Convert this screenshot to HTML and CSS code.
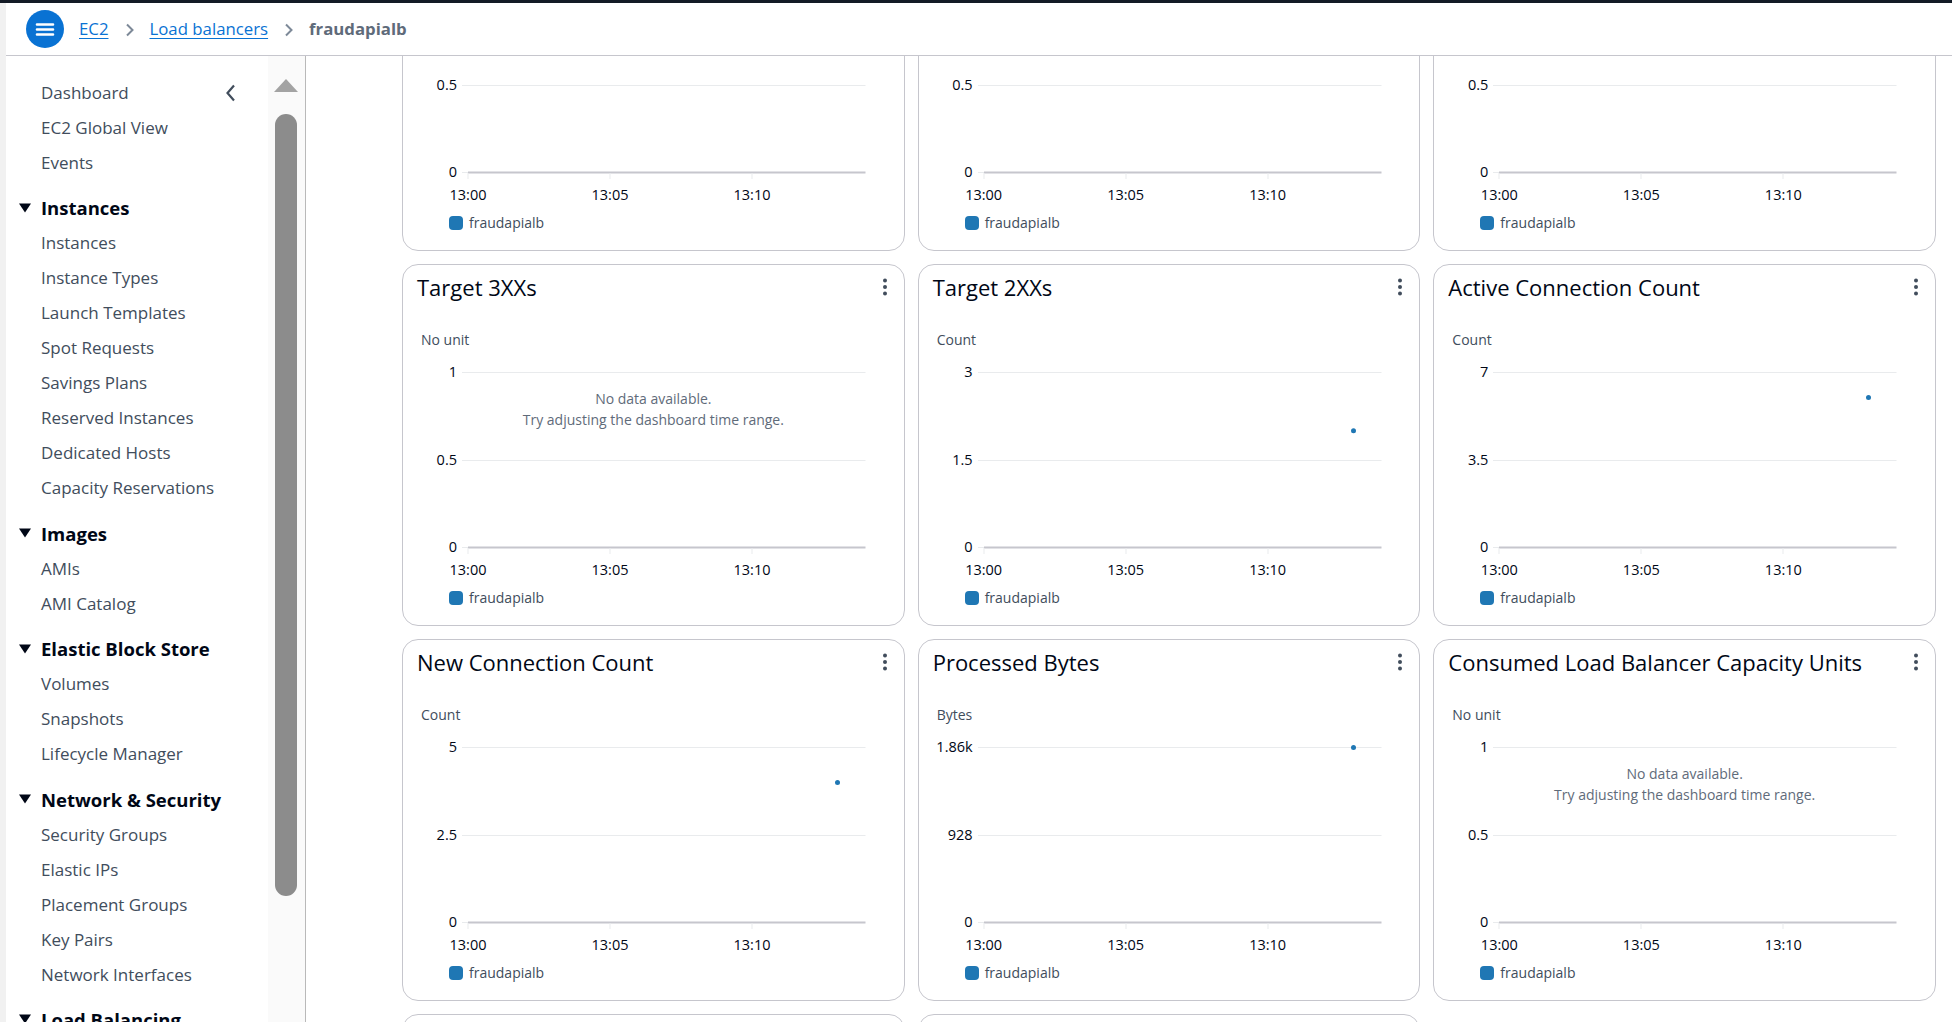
FILE: index.html
```html
<!DOCTYPE html>
<html lang="en">
<head>
<meta charset="utf-8">
<title>fraudapialb | Load balancers | EC2</title>
<link rel="stylesheet" href="styles.css">
</head>
<body>
<div class="topbar"></div>
<div class="frame">
  <div class="edge"></div>
  <div class="app">
    <header class="header">
      <span class="menu-btn">
        <svg width="38" height="38" viewBox="0 0 38 38"><circle cx="19" cy="19" r="19" fill="#0972d3"/><path d="M11 14.5h16M11 19.5h16M11 24.5h16" stroke="#fff" stroke-width="2.6" stroke-linecap="round"/></svg>
      </span>
      <nav class="crumbs">
        <a class="crumb-link" href="#">EC2</a>
        <svg class="crumb-sep" width="10" height="14" viewBox="0 0 10 14"><path d="M2 1.5l5.5 5.5L2 12.5" fill="none" stroke="#7d8998" stroke-width="2"/></svg>
        <a class="crumb-link" href="#">Load balancers</a>
        <svg class="crumb-sep" width="10" height="14" viewBox="0 0 10 14"><path d="M2 1.5l5.5 5.5L2 12.5" fill="none" stroke="#7d8998" stroke-width="2"/></svg>
        <span class="crumb-current">fraudapialb</span>
      </nav>
    </header>
    <div class="body">
      <aside class="sidenav">
        <div class="nav-list">
          <div class="nav-item nav-first"><span>Dashboard</span>
            <svg class="nav-close" width="12" height="18" viewBox="0 0 12 18"><path d="M9 1.5L2.5 9 9 16.5" fill="none" stroke="#414d5c" stroke-width="2.2"/></svg>
          </div>
          <div class="nav-item">EC2 Global View</div>
          <div class="nav-item">Events</div>
          <div class="nav-section"><svg class="tri" width="14" height="10" viewBox="0 0 14 10"><path d="M1 0.5h12L7 9.5z" fill="#000716"/></svg>Instances</div>
          <div class="nav-item">Instances</div>
          <div class="nav-item">Instance Types</div>
          <div class="nav-item">Launch Templates</div>
          <div class="nav-item">Spot Requests</div>
          <div class="nav-item">Savings Plans</div>
          <div class="nav-item">Reserved Instances</div>
          <div class="nav-item">Dedicated Hosts</div>
          <div class="nav-item">Capacity Reservations</div>
          <div class="nav-section"><svg class="tri" width="14" height="10" viewBox="0 0 14 10"><path d="M1 0.5h12L7 9.5z" fill="#000716"/></svg>Images</div>
          <div class="nav-item">AMIs</div>
          <div class="nav-item">AMI Catalog</div>
          <div class="nav-section"><svg class="tri" width="14" height="10" viewBox="0 0 14 10"><path d="M1 0.5h12L7 9.5z" fill="#000716"/></svg>Elastic Block Store</div>
          <div class="nav-item">Volumes</div>
          <div class="nav-item">Snapshots</div>
          <div class="nav-item">Lifecycle Manager</div>
          <div class="nav-section"><svg class="tri" width="14" height="10" viewBox="0 0 14 10"><path d="M1 0.5h12L7 9.5z" fill="#000716"/></svg>Network &amp; Security</div>
          <div class="nav-item">Security Groups</div>
          <div class="nav-item">Elastic IPs</div>
          <div class="nav-item">Placement Groups</div>
          <div class="nav-item">Key Pairs</div>
          <div class="nav-item">Network Interfaces</div>
          <div class="nav-section"><svg class="tri" width="14" height="10" viewBox="0 0 14 10"><path d="M1 0.5h12L7 9.5z" fill="#000716"/></svg>Load Balancing</div>
        </div>
      </aside>
      <div class="nav-scroll">
        <svg class="scroll-up" width="24" height="13" viewBox="0 0 24 13"><path d="M12 0L24 13H0z" fill="#a3a3a3"/></svg>
        <div class="scroll-thumb"></div>
      </div>
      <main class="main">
        <div class="grid">

          <!-- row 1 (scrolled mostly out of view) -->
          <section class="card">
            <div class="card-head"><h2 class="card-title"></h2></div>
            <div class="unit"></div>
            <div class="plot">
              <svg class="plot-lines" width="100%" height="238"><line class="gl" x1="59" y1="22.5" x2="462.5" y2="22.5"/><line class="gl" x1="59" y1="110.5" x2="462.5" y2="110.5"/><line class="gl" x1="59" y1="197.5" x2="65" y2="197.5"/><line class="ax" x1="65" y1="197.5" x2="462.5" y2="197.5"/><line class="tk" x1="65" y1="198" x2="65" y2="204"/><line class="tk" x1="207" y1="198" x2="207" y2="204"/><line class="tk" x1="349" y1="198" x2="349" y2="204"/></svg>
              <span class="ylab y-mid">0.5</span><span class="ylab y-bot">0</span>
              <span class="xlab x0">13:00</span><span class="xlab x5">13:05</span><span class="xlab x10">13:10</span>
            </div>
            <div class="legend"><span class="swatch"></span>fraudapialb</div>
          </section>
          <section class="card">
            <div class="card-head"><h2 class="card-title"></h2></div>
            <div class="unit"></div>
            <div class="plot">
              <svg class="plot-lines" width="100%" height="238"><line class="gl" x1="59" y1="22.5" x2="462.5" y2="22.5"/><line class="gl" x1="59" y1="110.5" x2="462.5" y2="110.5"/><line class="gl" x1="59" y1="197.5" x2="65" y2="197.5"/><line class="ax" x1="65" y1="197.5" x2="462.5" y2="197.5"/><line class="tk" x1="65" y1="198" x2="65" y2="204"/><line class="tk" x1="207" y1="198" x2="207" y2="204"/><line class="tk" x1="349" y1="198" x2="349" y2="204"/></svg>
              <span class="ylab y-mid">0.5</span><span class="ylab y-bot">0</span>
              <span class="xlab x0">13:00</span><span class="xlab x5">13:05</span><span class="xlab x10">13:10</span>
            </div>
            <div class="legend"><span class="swatch"></span>fraudapialb</div>
          </section>
          <section class="card">
            <div class="card-head"><h2 class="card-title"></h2></div>
            <div class="unit"></div>
            <div class="plot">
              <svg class="plot-lines" width="100%" height="238"><line class="gl" x1="59" y1="22.5" x2="462.5" y2="22.5"/><line class="gl" x1="59" y1="110.5" x2="462.5" y2="110.5"/><line class="gl" x1="59" y1="197.5" x2="65" y2="197.5"/><line class="ax" x1="65" y1="197.5" x2="462.5" y2="197.5"/><line class="tk" x1="65" y1="198" x2="65" y2="204"/><line class="tk" x1="207" y1="198" x2="207" y2="204"/><line class="tk" x1="349" y1="198" x2="349" y2="204"/></svg>
              <span class="ylab y-mid">0.5</span><span class="ylab y-bot">0</span>
              <span class="xlab x0">13:00</span><span class="xlab x5">13:05</span><span class="xlab x10">13:10</span>
            </div>
            <div class="legend"><span class="swatch"></span>fraudapialb</div>
          </section>

          <!-- row 2 -->
          <section class="card">
            <div class="card-head"><h2 class="card-title">Target 3XXs</h2><svg class="kebab" width="6" height="20" viewBox="0 0 6 20"><circle cx="3" cy="3.5" r="2"/><circle cx="3" cy="10" r="2"/><circle cx="3" cy="16.5" r="2"/></svg></div>
            <div class="unit">No unit</div>
            <div class="plot">
              <svg class="plot-lines" width="100%" height="238"><line class="gl" x1="59" y1="22.5" x2="462.5" y2="22.5"/><line class="gl" x1="59" y1="110.5" x2="462.5" y2="110.5"/><line class="gl" x1="59" y1="197.5" x2="65" y2="197.5"/><line class="ax" x1="65" y1="197.5" x2="462.5" y2="197.5"/><line class="tk" x1="65" y1="198" x2="65" y2="204"/><line class="tk" x1="207" y1="198" x2="207" y2="204"/><line class="tk" x1="349" y1="198" x2="349" y2="204"/></svg>
              <span class="ylab y-top">1</span><span class="ylab y-mid">0.5</span><span class="ylab y-bot">0</span>
              <div class="nodata"><div>No data available.</div><div>Try adjusting the dashboard time range.</div></div>
              <span class="xlab x0">13:00</span><span class="xlab x5">13:05</span><span class="xlab x10">13:10</span>
            </div>
            <div class="legend"><span class="swatch"></span>fraudapialb</div>
          </section>
          <section class="card">
            <div class="card-head"><h2 class="card-title">Target 2XXs</h2><svg class="kebab" width="6" height="20" viewBox="0 0 6 20"><circle cx="3" cy="3.5" r="2"/><circle cx="3" cy="10" r="2"/><circle cx="3" cy="16.5" r="2"/></svg></div>
            <div class="unit">Count</div>
            <div class="plot">
              <svg class="plot-lines" width="100%" height="238"><line class="gl" x1="59" y1="22.5" x2="462.5" y2="22.5"/><line class="gl" x1="59" y1="110.5" x2="462.5" y2="110.5"/><line class="gl" x1="59" y1="197.5" x2="65" y2="197.5"/><line class="ax" x1="65" y1="197.5" x2="462.5" y2="197.5"/><line class="tk" x1="65" y1="198" x2="65" y2="204"/><line class="tk" x1="207" y1="198" x2="207" y2="204"/><line class="tk" x1="349" y1="198" x2="349" y2="204"/><circle class="dot" cx="434.5" cy="80.7" r="2.5"/></svg>
              <span class="ylab y-top">3</span><span class="ylab y-mid">1.5</span><span class="ylab y-bot">0</span>
              <span class="xlab x0">13:00</span><span class="xlab x5">13:05</span><span class="xlab x10">13:10</span>
            </div>
            <div class="legend"><span class="swatch"></span>fraudapialb</div>
          </section>
          <section class="card">
            <div class="card-head"><h2 class="card-title">Active Connection Count</h2><svg class="kebab" width="6" height="20" viewBox="0 0 6 20"><circle cx="3" cy="3.5" r="2"/><circle cx="3" cy="10" r="2"/><circle cx="3" cy="16.5" r="2"/></svg></div>
            <div class="unit">Count</div>
            <div class="plot">
              <svg class="plot-lines" width="100%" height="238"><line class="gl" x1="59" y1="22.5" x2="462.5" y2="22.5"/><line class="gl" x1="59" y1="110.5" x2="462.5" y2="110.5"/><line class="gl" x1="59" y1="197.5" x2="65" y2="197.5"/><line class="ax" x1="65" y1="197.5" x2="462.5" y2="197.5"/><line class="tk" x1="65" y1="198" x2="65" y2="204"/><line class="tk" x1="207" y1="198" x2="207" y2="204"/><line class="tk" x1="349" y1="198" x2="349" y2="204"/><circle class="dot" cx="434.5" cy="47.4" r="2.5"/></svg>
              <span class="ylab y-top">7</span><span class="ylab y-mid">3.5</span><span class="ylab y-bot">0</span>
              <span class="xlab x0">13:00</span><span class="xlab x5">13:05</span><span class="xlab x10">13:10</span>
            </div>
            <div class="legend"><span class="swatch"></span>fraudapialb</div>
          </section>

          <!-- row 3 -->
          <section class="card">
            <div class="card-head"><h2 class="card-title">New Connection Count</h2><svg class="kebab" width="6" height="20" viewBox="0 0 6 20"><circle cx="3" cy="3.5" r="2"/><circle cx="3" cy="10" r="2"/><circle cx="3" cy="16.5" r="2"/></svg></div>
            <div class="unit">Count</div>
            <div class="plot">
              <svg class="plot-lines" width="100%" height="238"><line class="gl" x1="59" y1="22.5" x2="462.5" y2="22.5"/><line class="gl" x1="59" y1="110.5" x2="462.5" y2="110.5"/><line class="gl" x1="59" y1="197.5" x2="65" y2="197.5"/><line class="ax" x1="65" y1="197.5" x2="462.5" y2="197.5"/><line class="tk" x1="65" y1="198" x2="65" y2="204"/><line class="tk" x1="207" y1="198" x2="207" y2="204"/><line class="tk" x1="349" y1="198" x2="349" y2="204"/><circle class="dot" cx="434.5" cy="57.4" r="2.5"/></svg>
              <span class="ylab y-top">5</span><span class="ylab y-mid">2.5</span><span class="ylab y-bot">0</span>
              <span class="xlab x0">13:00</span><span class="xlab x5">13:05</span><span class="xlab x10">13:10</span>
            </div>
            <div class="legend"><span class="swatch"></span>fraudapialb</div>
          </section>
          <section class="card">
            <div class="card-head"><h2 class="card-title">Processed Bytes</h2><svg class="kebab" width="6" height="20" viewBox="0 0 6 20"><circle cx="3" cy="3.5" r="2"/><circle cx="3" cy="10" r="2"/><circle cx="3" cy="16.5" r="2"/></svg></div>
            <div class="unit">Bytes</div>
            <div class="plot">
              <svg class="plot-lines" width="100%" height="238"><line class="gl" x1="59" y1="22.5" x2="462.5" y2="22.5"/><line class="gl" x1="59" y1="110.5" x2="462.5" y2="110.5"/><line class="gl" x1="59" y1="197.5" x2="65" y2="197.5"/><line class="ax" x1="65" y1="197.5" x2="462.5" y2="197.5"/><line class="tk" x1="65" y1="198" x2="65" y2="204"/><line class="tk" x1="207" y1="198" x2="207" y2="204"/><line class="tk" x1="349" y1="198" x2="349" y2="204"/><circle class="dot" cx="434.5" cy="22.5" r="2.5"/></svg>
              <span class="ylab y-top">1.86k</span><span class="ylab y-mid">928</span><span class="ylab y-bot">0</span>
              <span class="xlab x0">13:00</span><span class="xlab x5">13:05</span><span class="xlab x10">13:10</span>
            </div>
            <div class="legend"><span class="swatch"></span>fraudapialb</div>
          </section>
          <section class="card">
            <div class="card-head"><h2 class="card-title">Consumed Load Balancer Capacity Units</h2><svg class="kebab" width="6" height="20" viewBox="0 0 6 20"><circle cx="3" cy="3.5" r="2"/><circle cx="3" cy="10" r="2"/><circle cx="3" cy="16.5" r="2"/></svg></div>
            <div class="unit">No unit</div>
            <div class="plot">
              <svg class="plot-lines" width="100%" height="238"><line class="gl" x1="59" y1="22.5" x2="462.5" y2="22.5"/><line class="gl" x1="59" y1="110.5" x2="462.5" y2="110.5"/><line class="gl" x1="59" y1="197.5" x2="65" y2="197.5"/><line class="ax" x1="65" y1="197.5" x2="462.5" y2="197.5"/><line class="tk" x1="65" y1="198" x2="65" y2="204"/><line class="tk" x1="207" y1="198" x2="207" y2="204"/><line class="tk" x1="349" y1="198" x2="349" y2="204"/></svg>
              <span class="ylab y-top">1</span><span class="ylab y-mid">0.5</span><span class="ylab y-bot">0</span>
              <div class="nodata"><div>No data available.</div><div>Try adjusting the dashboard time range.</div></div>
              <span class="xlab x0">13:00</span><span class="xlab x5">13:05</span><span class="xlab x10">13:10</span>
            </div>
            <div class="legend"><span class="swatch"></span>fraudapialb</div>
          </section>

          <!-- row 4 (only the top edge is in view) -->
          <section class="card"></section>
          <section class="card"></section>

        </div>
      </main>
    </div>
  </div>
</div>
</body>
</html>
```

FILE: styles.css
```css
* { box-sizing: border-box; }

html, body {
  margin: 0;
  padding: 0;
  height: 100%;
  overflow: hidden;
  background: #ffffff;
  font-family: "Open Sans", "Noto Sans", sans-serif;
  color: #000716;
}

.topbar {
  height: 3px;
  background: #131b26;
}

.frame {
  display: flex;
  height: calc(100vh - 3px);
}

.edge {
  width: 6px;
  flex: none;
  background: #f1f1f1;
}

.app {
  flex: 1;
  display: flex;
  flex-direction: column;
  min-width: 0;
}

/* ---------- header ---------- */
.header {
  height: 53px;
  flex: none;
  display: flex;
  align-items: center;
  padding-left: 20px;
  border-bottom: 1px solid #c6c6cd;
  background: #fff;
}

.menu-btn {
  display: flex;
  width: 38px;
  height: 38px;
  margin-top: -1px;
}

.crumbs {
  display: flex;
  align-items: center;
  margin-left: 15px;
  font-size: 16.8px;
  line-height: 22px;
}

.crumb-link {
  color: #0972d3;
  text-decoration: underline;
  text-underline-offset: 3px;
  text-decoration-thickness: 1px;
}

.crumb-sep {
  margin: 1px 15px 0 16px;
}

.crumb-current {
  color: #5f6b7a;
  font-weight: 700;
}

/* ---------- body ---------- */
.body {
  flex: 1;
  display: flex;
  min-height: 0;
}

.sidenav {
  width: 262px;
  flex: none;
  overflow: hidden;
  background: #fff;
}

.nav-list {
  padding-top: 19px;
}

.nav-item {
  height: 35px;
  display: flex;
  align-items: center;
  padding-left: 35px;
  font-size: 17px;
  color: #414d5c;
  white-space: nowrap;
}

.nav-first {
  justify-content: space-between;
  padding-right: 31px;
}

.nav-close {
  margin-top: 1px;
}

.nav-section {
  height: 35px;
  margin-top: 10.4px;
  display: flex;
  align-items: center;
  gap: 9px;
  padding-left: 12px;
  font-size: 18.5px;
  font-weight: 700;
  color: #000716;
  white-space: nowrap;
}

.tri {
  flex: none;
}

.nav-scroll {
  width: 38px;
  flex: none;
  background: #fafafa;
  border-right: 1px solid #b9b9b9;
  display: flex;
  flex-direction: column;
  align-items: center;
  padding-top: 23px;
  padding-right: 1px;
}

.scroll-up {
  display: block;
}

.scroll-thumb {
  margin-top: 22px;
  width: 22px;
  height: 782px;
  border-radius: 11px;
  background: #8c8c8c;
}

/* ---------- main ---------- */
.main {
  flex: 1;
  overflow: hidden;
  padding: 0 16px 0 96px;
}

.grid {
  margin-top: -167px;
  display: grid;
  grid-template-columns: repeat(3, 1fr);
  grid-auto-rows: 362px;
  column-gap: 13px;
  row-gap: 13px;
}

.card {
  border: 1px solid #c6c6cd;
  border-radius: 16px;
  background: #fff;
  min-width: 0;
}

.card-head {
  display: flex;
  align-items: center;
  justify-content: space-between;
  min-height: 37px;
  padding: 7px 16px 0 14px;
}

.card-title {
  margin: 0;
  font-size: 22px;
  line-height: 30px;
  font-weight: 400;
  color: #000716;
  white-space: nowrap;
}

.kebab {
  fill: #414d5c;
  margin-top: -1px;
}

.unit {
  margin-top: 28px;
  height: 20px;
  padding-left: 18px;
  font-size: 14px;
  line-height: 20px;
  color: #414d5c;
}

.plot {
  position: relative;
  height: 238px;
  font-size: 14.5px;
  line-height: 20px;
}

.plot-lines {
  position: absolute;
  left: 0;
  top: 0;
}

.gl { stroke: #e9ebed; stroke-width: 1; }
.ax { stroke: #c6c6cd; stroke-width: 2; }
.tk { stroke: #e9ebed; stroke-width: 1; }
.dot { fill: #1f77b4; }

.ylab {
  position: absolute;
  left: 0;
  width: 54px;
  text-align: right;
  color: #000716;
}
.y-top { top: 12px; }
.y-mid { top: 100px; }
.y-bot { top: 187px; }

.xlab {
  position: absolute;
  top: 210px;
  transform: translateX(-50%);
  color: #000716;
}
.x0 { left: 65px; }
.x5 { left: 207px; }
.x10 { left: 349px; }

.nodata {
  position: absolute;
  left: 0;
  right: 0;
  top: 39px;
  text-align: center;
  color: #5f6b7a;
  font-size: 14px;
  line-height: 20.5px;
}

.legend {
  display: flex;
  align-items: center;
  gap: 6px;
  padding-left: 46px;
  font-size: 14px;
  line-height: 20px;
  color: #414d5c;
}

.swatch {
  width: 14px;
  height: 14px;
  border-radius: 4px;
  background: #1f77b4;
}
```
